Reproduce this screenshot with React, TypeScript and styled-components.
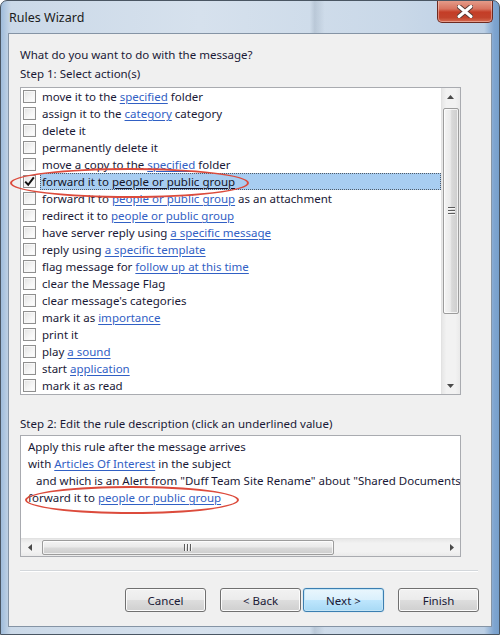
import React from 'react';
import styled, { createGlobalStyle, css } from 'styled-components';

const GlobalStyle = createGlobalStyle`
  html, body {
    margin: 0;
    padding: 0;
    background: #ffffff;
  }
  body {
    font-family: "Noto Sans", "Liberation Sans", sans-serif;
    font-size: 11.5px;
    color: #1a1936;
  }
`;

const Window = styled.div`
  position: relative;
  width: 500px;
  height: 635px;
  box-sizing: border-box;
  display: flex;
  flex-direction: column;
  overflow: hidden;
  border: 1px solid #4a5663;
  border-radius: 7px 7px 0 0;
  background:
    linear-gradient(90deg, rgba(255, 255, 255, 0) 62%, rgba(90, 110, 130, 0.18) 63%, rgba(255, 255, 255, 0) 65%),
    linear-gradient(90deg, #9fbcdb 0%, #cbd9e8 2%, #d6e1ed 40%, #c9d8e8 80%, #bdd0e5 97%, #7fa5d0 99%, #769fcb 100%);
`;

const TitleBar = styled.div`
  height: 32px;
  display: flex;
  align-items: flex-start;
  flex: none;
`;

const Title = styled.div`
  padding-left: 8px;
  padding-top: 1px;
  line-height: 32px;
  font-size: 12.5px;
  color: #1b1b1b;
`;

const CloseButton = styled.div`
  margin-left: auto;
  margin-right: 6px;
  margin-top: -1px;
  width: 56px;
  height: 23px;
  box-sizing: border-box;
  border: 1px solid #6e2a20;
  border-top: none;
  border-radius: 0 0 5px 5px;
  background: linear-gradient(180deg, #e6a08e 0%, #d87460 40%, #c43d27 55%, #c2432c 80%, #d66c52 100%);
  box-shadow: inset 0 0 0 1px rgba(255, 220, 210, 0.45);
  display: flex;
  align-items: center;
  justify-content: center;
`;

const Client = styled.div`
  flex: 1;
  margin: 0 7px 7px;
  border: 1px solid #8594a5;
  background: #f0f0f0;
  padding: 13px 0 0 11px;
  display: flex;
  flex-direction: column;
`;

const Heading = styled.div<{ $gap?: number }>`
  line-height: 16px;
  margin-top: ${p => p.$gap ?? 0}px;
  white-space: nowrap;
`;

const ListBox = styled.div`
  margin-top: 5px;
  width: 441px;
  height: 308px;
  box-sizing: border-box;
  border: 1px solid #a9abb0;
  background: #ffffff;
  display: flex;
`;

const Rows = styled.div`
  flex: 1;
  display: flex;
  flex-direction: column;
  overflow: hidden;
`;

const Row = styled.div`
  height: 17px;
  flex: none;
  display: flex;
  align-items: center;
  white-space: nowrap;
`;

const CheckBox = styled.span`
  width: 13px;
  height: 13px;
  flex: none;
  box-sizing: border-box;
  margin-left: 2px;
  border: 1px solid #8f8f8f;
  background: linear-gradient(135deg, #e2e2e2 0%, #f6f6f6 60%, #ffffff 100%);
  box-shadow: inset 0 0 0 1px #f7f7f7;
  display: flex;
  align-items: center;
  justify-content: center;
`;

const Label = styled.span<{ $selected?: boolean }>`
  margin-left: 4px;
  padding: 0 1px;
  height: 17px;
  line-height: 15px;
  box-sizing: border-box;
  border: 1px dotted transparent;
  ${p =>
    p.$selected &&
    css`
      flex: 1;
      background: #a8cdf1;
      border-color: #505a66;
      color: #141428;
    `}
`;

const Link = styled.span<{ $plain?: boolean }>`
  color: ${p => (p.$plain ? 'inherit' : '#3160c4')};
  text-decoration: underline;
  text-underline-offset: 2px;
`;

const VScroll = styled.div`
  width: 19px;
  flex: none;
  box-sizing: border-box;
  border-left: 1px solid #e2e2e2;
  background: linear-gradient(90deg, #e7e7e7 0%, #f2f2f2 25%, #f2f2f2 75%, #eaeaea 100%);
  display: flex;
  flex-direction: column;
`;

const HScroll = styled.div`
  height: 18px;
  flex: none;
  box-sizing: border-box;
  border-top: 1px solid #e2e2e2;
  background: linear-gradient(180deg, #e7e7e7 0%, #f2f2f2 25%, #f2f2f2 75%, #eaeaea 100%);
  display: flex;
  align-items: stretch;
`;

const ArrowButton = styled.div`
  width: 17px;
  height: 17px;
  flex: none;
  display: flex;
  align-items: center;
  justify-content: center;
`;

const Spacer = styled.div`
  flex: 1;
`;

const VThumb = styled.div`
  margin: 3px 1px 0;
  height: 206px;
  box-sizing: border-box;
  border: 1px solid #9c9c9c;
  border-radius: 2px;
  background: linear-gradient(90deg, #f4f4f4 0%, #eaeaea 45%, #d9d9d9 55%, #cdcdcd 100%);
  box-shadow: inset 0 0 0 1px rgba(255, 255, 255, 0.7);
  display: flex;
  align-items: center;
  justify-content: center;
`;

const HThumb = styled.div`
  margin: 1px 0 1px 4px;
  width: 292px;
  box-sizing: border-box;
  border: 1px solid #9c9c9c;
  border-radius: 2px;
  background: linear-gradient(180deg, #f4f4f4 0%, #eaeaea 45%, #d9d9d9 55%, #cdcdcd 100%);
  box-shadow: inset 0 0 0 1px rgba(255, 255, 255, 0.7);
  display: flex;
  align-items: center;
  justify-content: center;
`;

const Grip = styled.div<{ $vertical?: boolean }>`
  ${p =>
    p.$vertical
      ? css`
          width: 7px;
          height: 8px;
          background: repeating-linear-gradient(180deg, #5c5c5c 0 1px, #f6f6f6 1px 2px, transparent 2px 3px);
        `
      : css`
          width: 8px;
          height: 7px;
          background: repeating-linear-gradient(90deg, #5c5c5c 0 1px, #f6f6f6 1px 2px, transparent 2px 3px);
        `}
`;

const DescBox = styled.div`
  margin-top: 3px;
  width: 441px;
  height: 122px;
  box-sizing: border-box;
  border: 1px solid #a9abb0;
  background: #ffffff;
  display: flex;
  flex-direction: column;
`;

const DescText = styled.div`
  flex: 1;
  padding: 2px 0 0 7px;
  overflow: hidden;
`;

const DescLine = styled.div<{ $indent?: number }>`
  line-height: 17px;
  white-space: nowrap;
  padding-left: ${p => p.$indent ?? 0}px;
`;

const Separator = styled.div`
  margin-top: 13px;
  width: 458px;
  border-top: 1px solid #d3d7db;
  border-bottom: 1px solid #ffffff;
`;

const Footer = styled.div`
  margin-top: 16px;
  padding-right: 12px;
  display: flex;
  justify-content: flex-end;
`;

const Button = styled.div<{ $primary?: boolean; $gap?: number }>`
  width: 81px;
  height: 24px;
  box-sizing: border-box;
  margin-right: ${p => p.$gap ?? 0}px;
  border: 1px solid #707070;
  border-radius: 3px;
  background: linear-gradient(180deg, #f2f2f2 0%, #ebebeb 50%, #dddddd 51%, #cfcfcf 100%);
  box-shadow: inset 0 0 0 1px #fbfbfb;
  display: flex;
  align-items: center;
  justify-content: center;
  color: #1a1936;
  ${p =>
    p.$primary &&
    css`
      border-color: #3c7fb1;
      background: linear-gradient(180deg, #eaf6fd 0%, #d9f0fc 50%, #bee6fd 51%, #a7d9f5 100%);
      box-shadow: inset 0 0 0 1px #c4e5f6, 0 0 1px #6fb2de;
    `}
`;

const Annotation = styled.div<{ $x: number; $y: number; $w: number; $h: number }>`
  position: absolute;
  left: ${p => p.$x}px;
  top: ${p => p.$y}px;
  width: ${p => p.$w}px;
  height: ${p => p.$h}px;
  box-sizing: border-box;
  border: 2px solid #dc4b3c;
  border-radius: 50%;
  pointer-events: none;
`;

type Part = [string, boolean?];

const actions: Part[][] = [
  [['move it to the '], ['specified', true], [' folder']],
  [['assign it to the '], ['category', true], [' category']],
  [['delete it']],
  [['permanently delete it']],
  [['move a copy to the '], ['specified', true], [' folder']],
  [['forward it to '], ['people or public group', true]],
  [['forward it to '], ['people or public group', true], [' as an attachment']],
  [['redirect it to '], ['people or public group', true]],
  [['have server reply using '], ['a specific message', true]],
  [['reply using '], ['a specific template', true]],
  [['flag message for '], ['follow up at this time', true]],
  [['clear the Message Flag']],
  [["clear message's categories"]],
  [['mark it as '], ['importance', true]],
  [['print it']],
  [['play '], ['a sound', true]],
  [['start '], ['application', true]],
  [['mark it as read']],
];

const SELECTED = 5;

const ArrowUp = () => (
  <svg width="7" height="4" viewBox="0 0 7 4">
    <polygon points="0,4 3.5,0 7,4" fill="#4a4a4a" />
  </svg>
);

const ArrowDown = () => (
  <svg width="7" height="4" viewBox="0 0 7 4">
    <polygon points="0,0 7,0 3.5,4" fill="#4a4a4a" />
  </svg>
);

const ArrowLeft = () => (
  <svg width="4" height="7" viewBox="0 0 4 7">
    <polygon points="4,0 4,7 0,3.5" fill="#4a4a4a" />
  </svg>
);

const ArrowRight = () => (
  <svg width="4" height="7" viewBox="0 0 4 7">
    <polygon points="0,0 4,3.5 0,7" fill="#4a4a4a" />
  </svg>
);

const CheckMark = () => (
  <svg width="11" height="11" viewBox="0 0 11 11">
    <path d="M1.2 5.6 L4.2 8.8 L9.8 1.4" fill="none" stroke="#111" strokeWidth="2" />
  </svg>
);

const CloseGlyph = () => (
  <svg width="16" height="13" viewBox="0 0 16 13">
    <path d="M2 1.5 L14 11.5 M14 1.5 L2 11.5" stroke="#5a3a34" strokeWidth="5" strokeLinecap="round" />
    <path d="M2 1.5 L14 11.5 M14 1.5 L2 11.5" stroke="#ffffff" strokeWidth="3" strokeLinecap="round" />
  </svg>
);

const App = () => (
  <>
    <GlobalStyle />
    <Window>
      <TitleBar>
        <Title>Rules Wizard</Title>
        <CloseButton>
          <CloseGlyph />
        </CloseButton>
      </TitleBar>
      <Client>
        <Heading>What do you want to do with the message?</Heading>
        <Heading $gap={3}>Step 1: Select action(s)</Heading>
        <ListBox>
          <Rows>
            {actions.map((parts, i) => (
              <Row key={i}>
                <CheckBox>{i === SELECTED && <CheckMark />}</CheckBox>
                <Label $selected={i === SELECTED}>
                  {parts.map(([text, link], j) =>
                    link ? (
                      <Link key={j} $plain={i === SELECTED}>
                        {text}
                      </Link>
                    ) : (
                      <span key={j}>{text}</span>
                    ),
                  )}
                </Label>
              </Row>
            ))}
          </Rows>
          <VScroll>
            <ArrowButton>
              <ArrowUp />
            </ArrowButton>
            <VThumb>
              <Grip $vertical />
            </VThumb>
            <Spacer />
            <ArrowButton>
              <ArrowDown />
            </ArrowButton>
          </VScroll>
        </ListBox>
        <Heading $gap={21}>Step 2: Edit the rule description (click an underlined value)</Heading>
        <DescBox>
          <DescText>
            <DescLine>Apply this rule after the message arrives</DescLine>
            <DescLine>
              with <Link>Articles Of Interest</Link> in the subject
            </DescLine>
            <DescLine $indent={8}>
              and which is an Alert from "Duff Team Site Rename" about "Shared Documents"
            </DescLine>
            <DescLine>
              forward it to <Link>people or public group</Link>
            </DescLine>
          </DescText>
          <HScroll>
            <ArrowButton>
              <ArrowLeft />
            </ArrowButton>
            <HThumb>
              <Grip />
            </HThumb>
            <Spacer />
            <ArrowButton>
              <ArrowRight />
            </ArrowButton>
          </HScroll>
        </DescBox>
        <Separator />
        <Footer>
          <Button $gap={14}>Cancel</Button>
          <Button $gap={2}>&lt; Back</Button>
          <Button $primary $gap={14}>
            Next &gt;
          </Button>
          <Button>Finish</Button>
        </Footer>
      </Client>
      <Annotation $x={9} $y={167} $w={239} $h={30} />
      <Annotation $x={24} $y={485} $w={214} $h={28} />
    </Window>
  </>
);

export default App;
